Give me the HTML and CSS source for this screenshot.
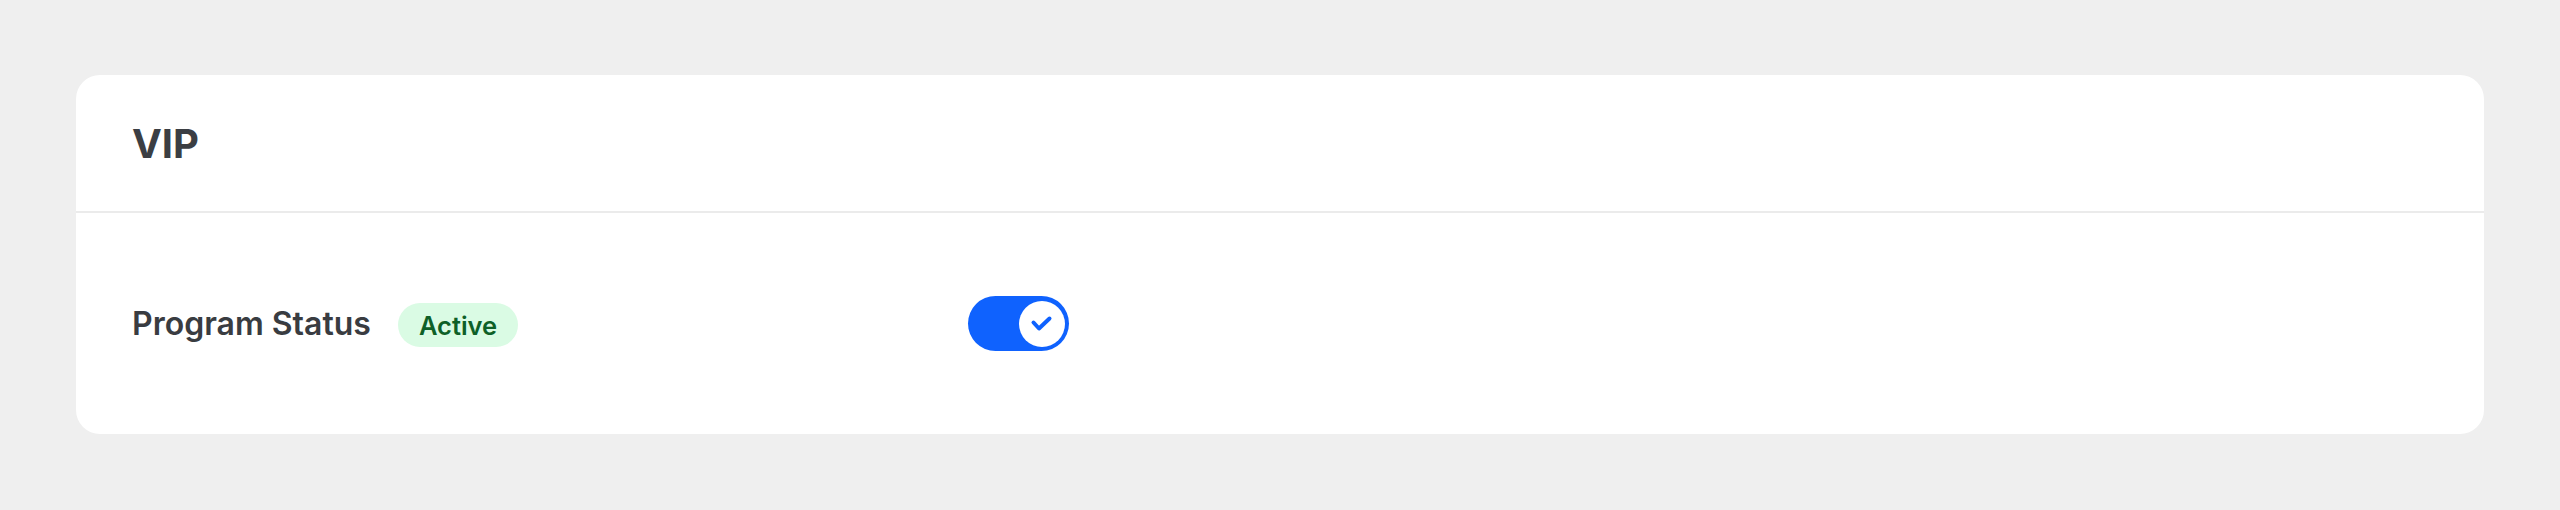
FILE: index.html
```html
<!DOCTYPE html>
<html lang="en">
<head>
<meta charset="utf-8">
<title>VIP</title>
<link rel="stylesheet" href="styles.css">
</head>
<body>
  <section class="card">
    <header class="card-header">
      <h2 class="card-title">VIP</h2>
    </header>
    <div class="card-body">
      <div class="row">
        <div class="label-group">
          <span class="label">Program Status</span>
          <span class="badge">Active</span>
        </div>
        <button class="toggle" type="button" aria-pressed="true" aria-label="Program Status">
          <span class="knob">
            <svg width="46" height="46" viewBox="-23 -23 46 46" aria-hidden="true">
              <path d="M-8.5 -1.5 L-3 4.5 L7.5 -5.5" fill="none" stroke="#0f62fe" stroke-width="4" stroke-linecap="round" stroke-linejoin="round"/>
            </svg>
          </span>
        </button>
      </div>
    </div>
  </section>
</body>
</html>
```

FILE: styles.css
```css
* { box-sizing: border-box; }

html, body {
  margin: 0;
  height: 100%;
}

body {
  background: #efefef;
  padding: 75px 76px 76px 76px;
  font-family: Inter, "Noto Sans", "Liberation Sans", sans-serif;
  color: #393c41;
}

.card {
  background: #ffffff;
  border-radius: 24px;
  height: 359px;
  display: flex;
  flex-direction: column;
}

.card-header {
  height: 138px;
  border-bottom: 2px solid #ebebeb;
  display: flex;
  align-items: center;
  padding: 0 56px;
}

.card-title {
  margin: 0;
  font-size: 40px;
  font-weight: 700;
  line-height: 1;
  padding-top: 2px;
  color: #3b3e43;
}

.card-body {
  flex: 1;
  display: flex;
  align-items: center;
  padding: 0 56px;
}

.row {
  display: grid;
  grid-template-columns: 836px auto;
  align-items: center;
}

.label-group {
  display: flex;
  align-items: center;
  gap: 27px;
}

.label {
  font-size: 32px;
  font-weight: 600;
  line-height: 1;
  color: #393c41;
}

.badge {
  display: inline-flex;
  align-items: center;
  height: 44px;
  padding: 0 21px;
  margin-top: 3px;
  border-radius: 22px;
  background: #dafbe4;
  color: #0e6027;
  font-size: 25.5px;
  font-weight: 600;
}

.toggle {
  width: 101px;
  height: 55px;
  border: 0;
  padding: 0 4px;
  border-radius: 28px;
  background: #0f62fe;
  display: flex;
  align-items: center;
  justify-content: flex-end;
  cursor: pointer;
}

.knob {
  width: 46px;
  height: 46px;
  border-radius: 50%;
  background: #ffffff;
  display: flex;
  align-items: center;
  justify-content: center;
}

.knob svg { display: block; }
```
